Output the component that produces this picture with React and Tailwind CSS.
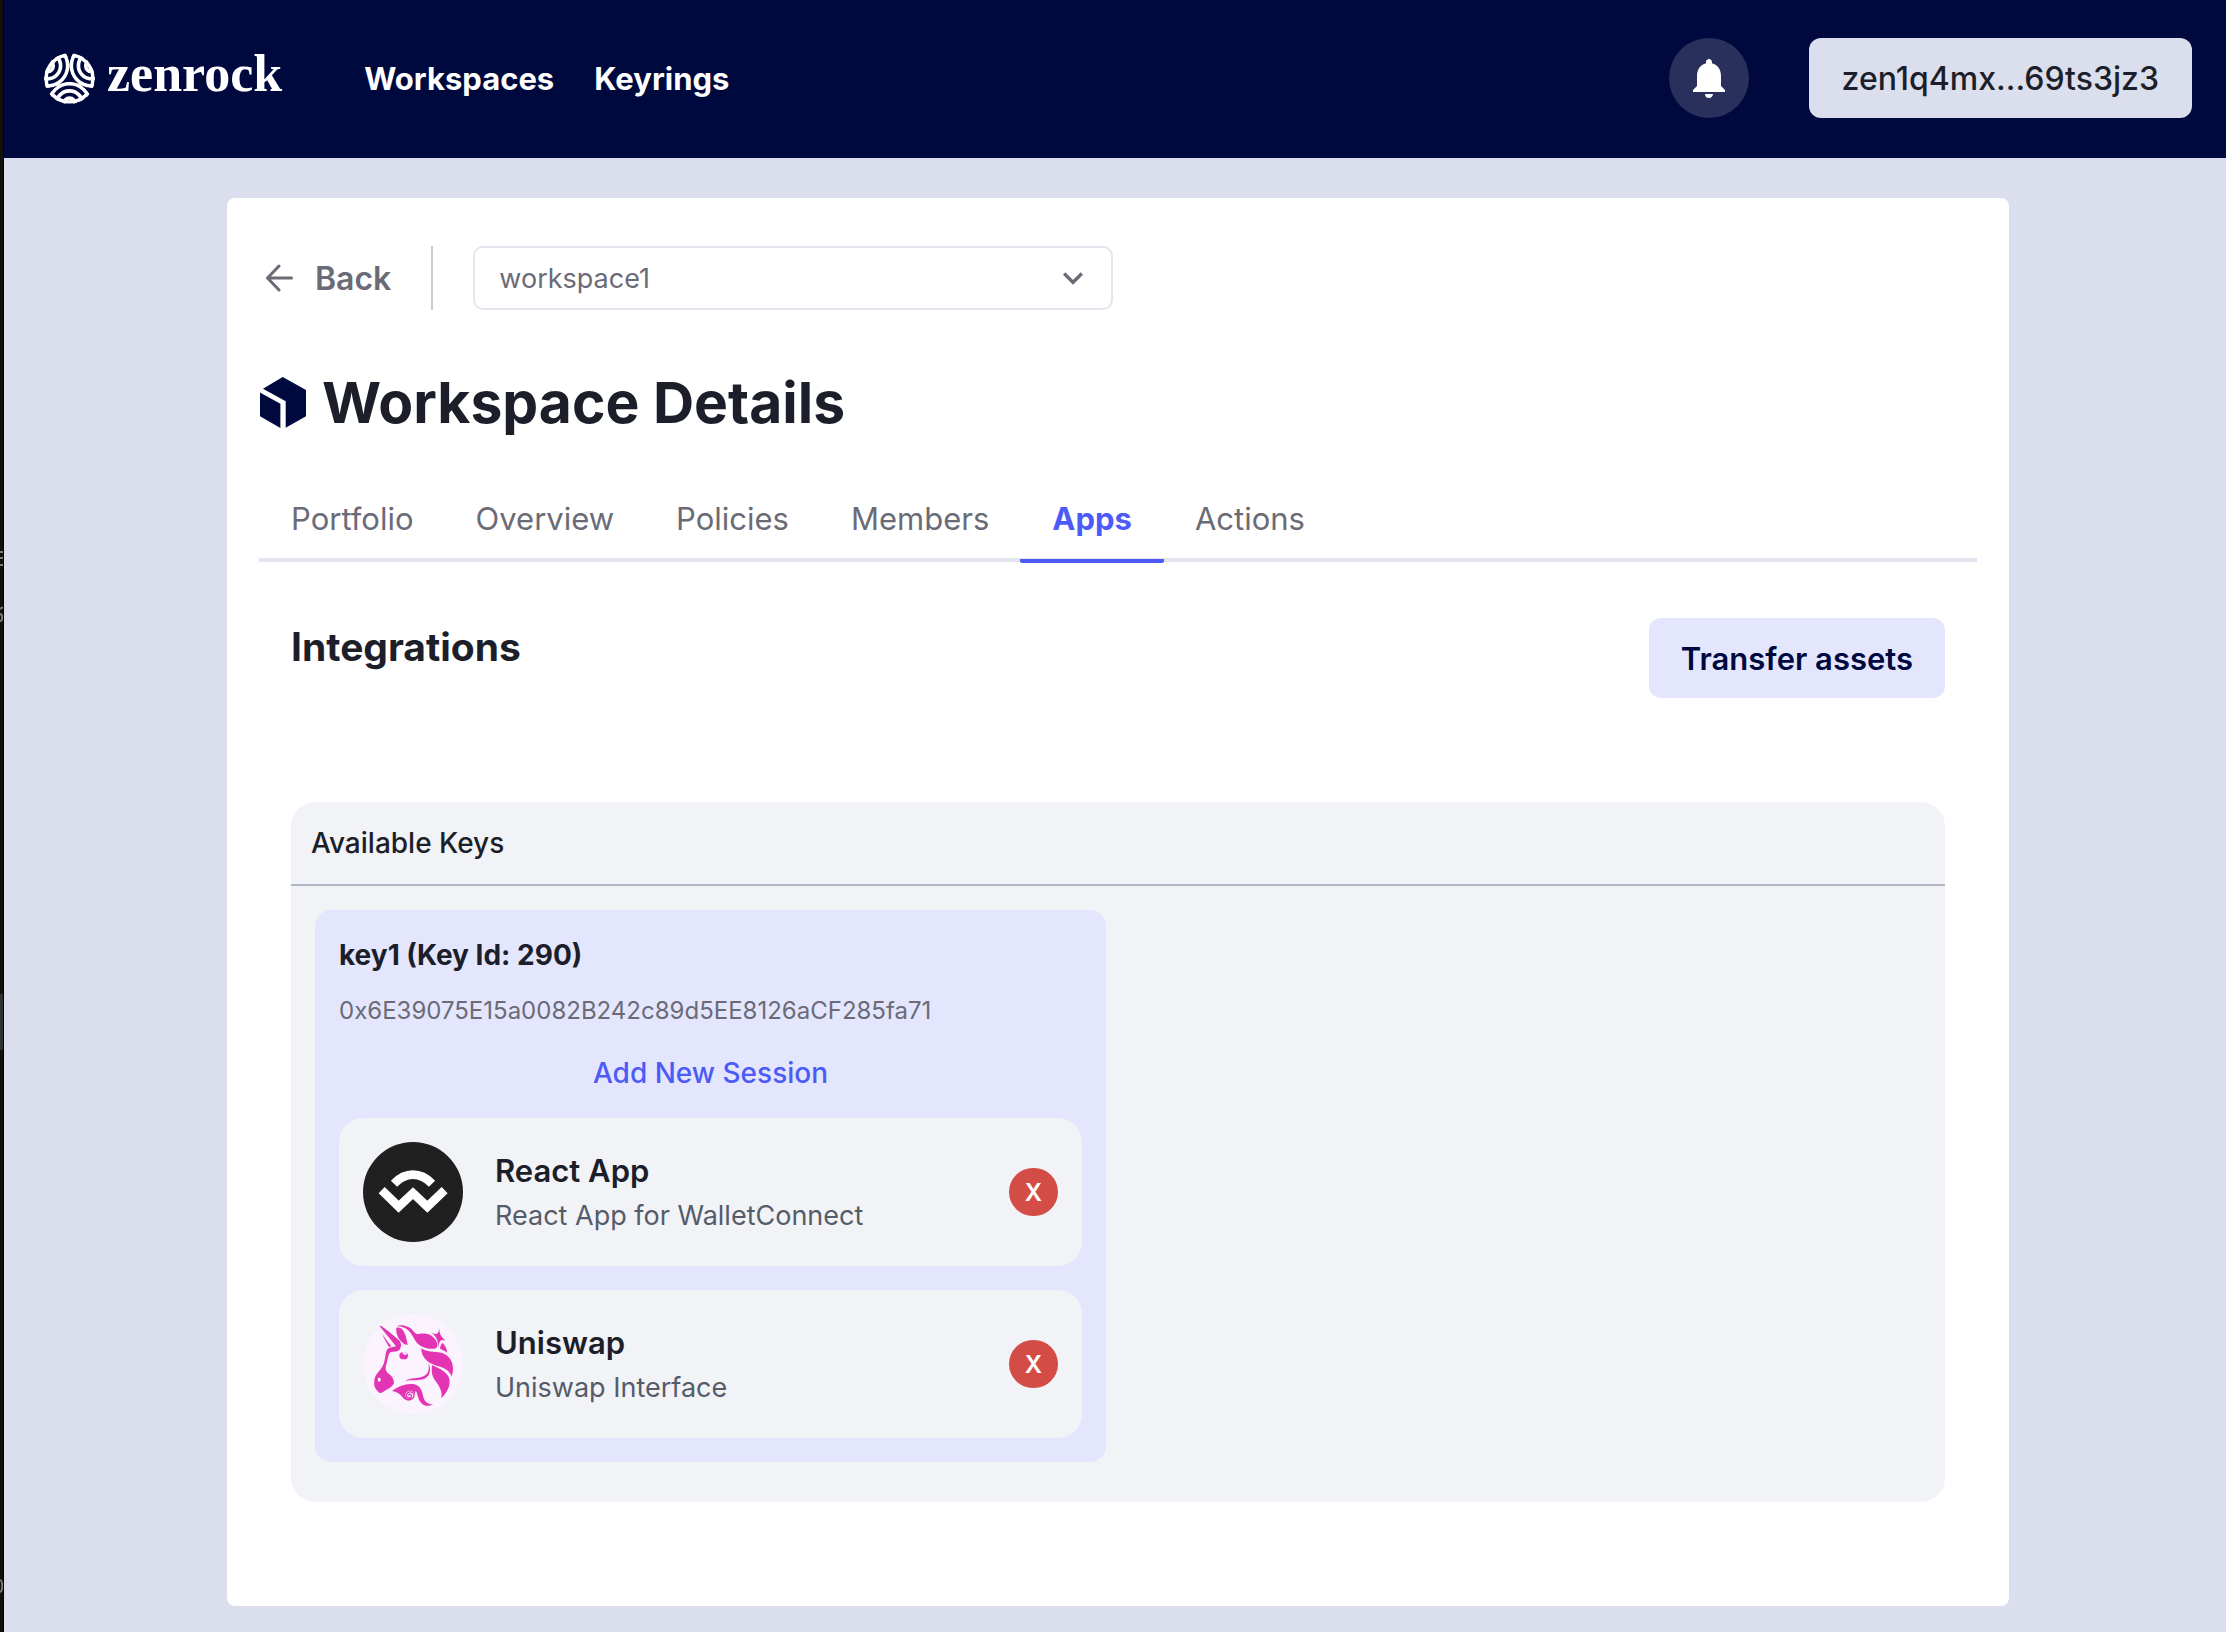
import { MdNotifications, MdKeyboardArrowDown } from "react-icons/md";

function ZenrockMark() {
  return (
    <svg viewBox="132 97 153 153" className="size-[51px]" aria-hidden="true">
      <defs>
        <clipPath id="zr-disc">
          <circle cx="208.5" cy="173.5" r="76" />
        </clipPath>
        <clipPath id="zr-lobes">
          <circle cx="208.5" cy="249.5" r="66" />
          <circle cx="142.7" cy="135.5" r="66" />
          <circle cx="274.3" cy="135.5" r="66" />
        </clipPath>
      </defs>
      <g clipPath="url(#zr-disc)">
        <g clipPath="url(#zr-lobes)" fill="none" stroke="#fff" strokeWidth="11">
          <circle cx="208.5" cy="173.5" r="70.5" />
          {[
            [208.5, 249.5],
            [142.7, 135.5],
            [274.3, 135.5],
          ].map(([x, y]) => (
            <g key={x}>
              <circle cx={x} cy={y} r="60.5" />
              <circle cx={x} cy={y} r="39" />
              <circle cx={x} cy={y} r="17" />
            </g>
          ))}
        </g>
      </g>
    </svg>
  );
}

function CubeIcon() {
  return (
    <svg viewBox="260 376 46 51" className="h-[51px] w-[46px] shrink-0" fill="#00093e" aria-hidden="true">
      <path d="M282.700 376 306 389v26.300L285.700 426.700V400.200L263 387.700Z" />
      <path d="M260 391.500 280.400 402.700V427L260 415.300Z" />
    </svg>
  );
}

function ArrowLeft() {
  return (
    <svg viewBox="0 0 28 28" className="size-7" fill="none" stroke="currentColor" strokeWidth="3" strokeLinecap="round" strokeLinejoin="round" aria-hidden="true">
      <path d="M26.500 14H2.500M14 2 2.500 14 14 26" />
    </svg>
  );
}

function WalletConnectLogo() {
  return (
    <svg viewBox="39 66 300 300" className="size-[100px] shrink-0" role="img" aria-label="WalletConnect">
      <circle cx="189" cy="216" r="150" fill="#202020" />
      <g fill="none" stroke="#fff" strokeWidth="26">
        <path d="M132 191Q158 164 189 164T246 191" />
        <path d="M95 210.500 146 260 189 219.500 232 260 284 210.500" />
      </g>
    </svg>
  );
}

function UniswapLogo() {
  return (
    <svg viewBox="39 42 300 300" className="size-[100px] shrink-0" role="img" aria-label="Uniswap">
      <circle cx="189" cy="192" r="150" fill="#fbf3fe" />
      <g fill="#e334b4">
        <path d="M89 79 93 77C112 91 132 106 147 121 154 129 156 139 149 149 141 157 129 153 121 157 114 163 114 176 110 190 105 205 106 214 116 221 126 227 132 238 132 250 128 260 117 266 108 270 101 274 96 280 89 279 84 276 82 272 78 268 72 261 72 250 73 240 76 222 89 214 98 198 107 182 105 160 111 149 118 141 130 141 138 139 124 120 105 99 89 79ZM84 234C82 241 84 246 88 245 93 242 94 237 90 233Z" fillRule="evenodd" />
        <path d="M96 101C107 115 114 128 124 138L117 141C109 128 102 115 96 101Z" />
        <path d="M139 84C148 80 157 86 162 96 168 108 171 122 173 135 161 133 151 124 145 113 140 104 138 94 139 84Z" />
        <path d="M140 78C158 72 180 80 189 92 195 99 199 103 207 102 230 98 245 105 255 117 262 126 266 138 258 145 244 149 225 145 211 137 197 129 192 113 182 99 172 85 157 79 140 78Z" />
        <path d="M267 82C269 99 268 106 287 122 272 117 268 121 265 144 264 121 262 113 245 98 261 106 267 103 267 82Z" />
        <path d="M277 128C286 136 292 147 291 159 286 152 276 149 270 146 271 139 272 134 277 128Z" />
        <path d="M214 145C230 157 252 154 274 158 296 164 309 183 309 204 309 214 308 222 304 229 299 211 281 202 260 197 234 190 213 172 214 145Z" />
        <path d="M247 195C263 205 287 211 296 231 306 256 289 279 274 295 278 273 267 258 257 244 247 230 242 213 247 195Z" />
        <path d="M235 190C244 205 242 228 224 236 207 243 185 238 165 242 184 232 204 237 222 228 239 219 237 205 235 190Z" />
        <path d="M126 273C145 259 169 249 193 253 211 257 216 272 219 287 223 304 233 314 249 313 239 320 223 319 213 308 202 295 204 281 197 272L193 288C190 303 172 305 162 296 153 286 146 276 126 273Z" />
      </g>
      <circle cx="180" cy="286" r="14" fill="#fbf3fe" />
      <path d="M166 292C174 304 194 298 192 284 189 272 172 273 169 285 168 293 178 297 184 291 187 285 180 280 176 285" fill="none" stroke="#e334b4" strokeWidth="4" strokeLinecap="round" />
      <ellipse cx="161" cy="167" rx="13" ry="11" fill="#e334b4" />
      <path d="M158 156C156 162 161 165 168 164 173 163 171 159 166 157Z" fill="#fbf3fe" />
    </svg>
  );
}

const tabs = ["Portfolio", "Overview", "Policies", "Members", "Apps", "Actions"];

const sessions = [
  { name: "React App", detail: "React App for WalletConnect", Logo: WalletConnectLogo },
  { name: "Uniswap", detail: "Uniswap Interface", Logo: UniswapLogo },
];

function SessionCard({ name, detail, Logo }) {
  return (
    <li className="flex items-center rounded-3xl bg-[#f1f3f7] p-6">
      <Logo />
      <div className="ml-8 flex-1 pt-1">
        <h4 className="text-[31px] leading-[44px] font-semibold">{name}</h4>
        <p className="text-[27px] leading-[46px] text-[#565b69]">{detail}</p>
      </div>
      <button type="button" aria-label={"Disconnect " + name} className="h-12 w-[49px] rounded-full bg-[#d34c46] pt-0.5 text-2xl font-semibold text-white">
        X
      </button>
    </li>
  );
}

function TopBar() {
  return (
    <header className="flex h-[158px] items-center bg-[#00093e] pr-[34px] pb-[2px] pl-10 text-white">
      <a href="#home" className="flex items-center gap-3">
        <ZenrockMark />
        <span className="pb-2 font-['Liberation_Serif',serif] text-[52px] leading-[52px] font-bold">zenrock</span>
      </a>
      <nav className="ml-[82px] flex gap-10 pt-0.5 text-[31px] leading-10 font-bold">
        <a href="#workspaces">Workspaces</a>
        <a href="#keyrings">Keyrings</a>
      </nav>
      <button type="button" aria-label="Notifications" className="mr-[60px] ml-auto flex size-20 items-center justify-center rounded-full bg-[#2a305c]">
        <MdNotifications className="size-12" />
      </button>
      <button type="button" className="h-20 rounded-xl bg-[#dbdeed] px-[33px] pt-0.5 text-[32px] font-medium text-[#1c1f2a]">
        zen1q4mx...69ts3jz3
      </button>
    </header>
  );
}

function WindowEdge() {
  return (
    <div className="flex w-1 shrink-0 flex-col border-r border-black bg-[#11100c]" aria-hidden="true">
      <svg viewBox="0 0 3 72" className="mt-[550px] h-[72px] w-[3px]" fill="none" stroke="#7d7c79" strokeWidth="2">
        <path d="M0 2H3M0 8H3M0 15H3M0 59 3 57M0 64C3 64 3 71 0 71" />
      </svg>
      <div className="mt-[372px] h-14 bg-[#313131]" />
      <svg viewBox="0 0 3 16" className="mt-[528px] h-4 w-[3px]" fill="none" stroke="#7d7c79" strokeWidth="2">
        <path d="M0 2C3 3 3 13 0 14" />
      </svg>
    </div>
  );
}

export default function App() {
  return (
    <div className="flex min-h-screen bg-[#dbdeed] font-['Inter',sans-serif] text-[#1c1f2a]">
      <WindowEdge />
      <div className="flex-1">
        <TopBar />
        <main className="pt-10 pr-[217px] pb-[26px] pl-[223px]">
          <div className="rounded-lg bg-white px-8 pt-12 pb-[104px]">
            <div className="flex h-16 items-center text-[#6a6b77]">
              <a href="#back" className="flex items-center gap-[22px] pl-[6px] text-[32px] font-semibold">
                <ArrowLeft />
                <span className="pt-0.5">Back</span>
              </a>
              <div className="mx-10 h-16 w-[2px] bg-[#cbcbcf]" />
              <div className="relative">
                <select aria-label="Workspace" className="h-16 w-[640px] appearance-none rounded-[10px] border-2 border-[#e2e6ee] bg-white px-6 pt-0.5 text-[27px]">
                  <option>workspace1</option>
                </select>
                <MdKeyboardArrowDown className="pointer-events-none absolute top-3 right-5 size-10" />
              </div>
            </div>

            <h1 className="mt-14 flex items-center gap-4 pl-px text-[57px] leading-[72px] font-bold">
              <CubeIcon />
              <span className="pt-0.5 leading-[70px]">Workspace Details</span>
            </h1>

            <div role="tablist" className="mt-10 flex h-[84px] border-b-4 border-[#e4e6ef] pl-px text-[31px] text-[#6a6b77]">
              {tabs.map((tab) =>
                tab === "Apps" ? (
                  <button key={tab} type="button" role="tab" aria-selected="true" className="-mb-[5px] rounded-[2px] border-b-4 border-[#4c5af7] px-8 pt-0.5 font-bold text-[#4c5af7]">
                    {tab}
                  </button>
                ) : (
                  <button key={tab} type="button" role="tab" aria-selected="false" className="px-[31px] pt-0.5">
                    {tab}
                  </button>
                ),
              )}
            </div>

            <section className="px-8 pt-14">
              <div className="flex items-start justify-between">
                <h2 className="pt-1 text-[39px] leading-[50px] font-bold">Integrations</h2>
                <button type="button" className="h-20 rounded-xl bg-[#e4e6fd] px-8 pt-0.5 text-[31px] font-semibold text-[#00093e]">
                  Transfer assets
                </button>
              </div>

              <div className="mt-[104px] rounded-3xl bg-[#f1f3f7] pb-10">
                <h3 className="border-b-2 border-[#b3b4c6] px-5 py-5 text-[28px] leading-[42px] font-medium">Available Keys</h3>
                <div className="grid grid-cols-2 gap-6 px-6 pt-6">
                  <article className="rounded-2xl bg-[#e4e6fd] p-6">
                    <h4 className="text-[28px] leading-[42px] font-bold">key1 (Key Id: 290)</h4>
                    <p className="mt-4 text-2xl leading-[38px] text-[#6a6b77]">0x6E39075E15a0082B242c89d5EE8126aCF285fa71</p>
                    <button type="button" className="mt-[22px] w-full text-[28px] leading-[42px] font-medium text-[#4c5af7]">
                      Add New Session
                    </button>
                    <ul className="mt-6 grid gap-6">
                      {sessions.map((s) => (
                        <SessionCard key={s.name} {...s} />
                      ))}
                    </ul>
                  </article>
                </div>
              </div>
            </section>
          </div>
        </main>
      </div>
    </div>
  );
}
